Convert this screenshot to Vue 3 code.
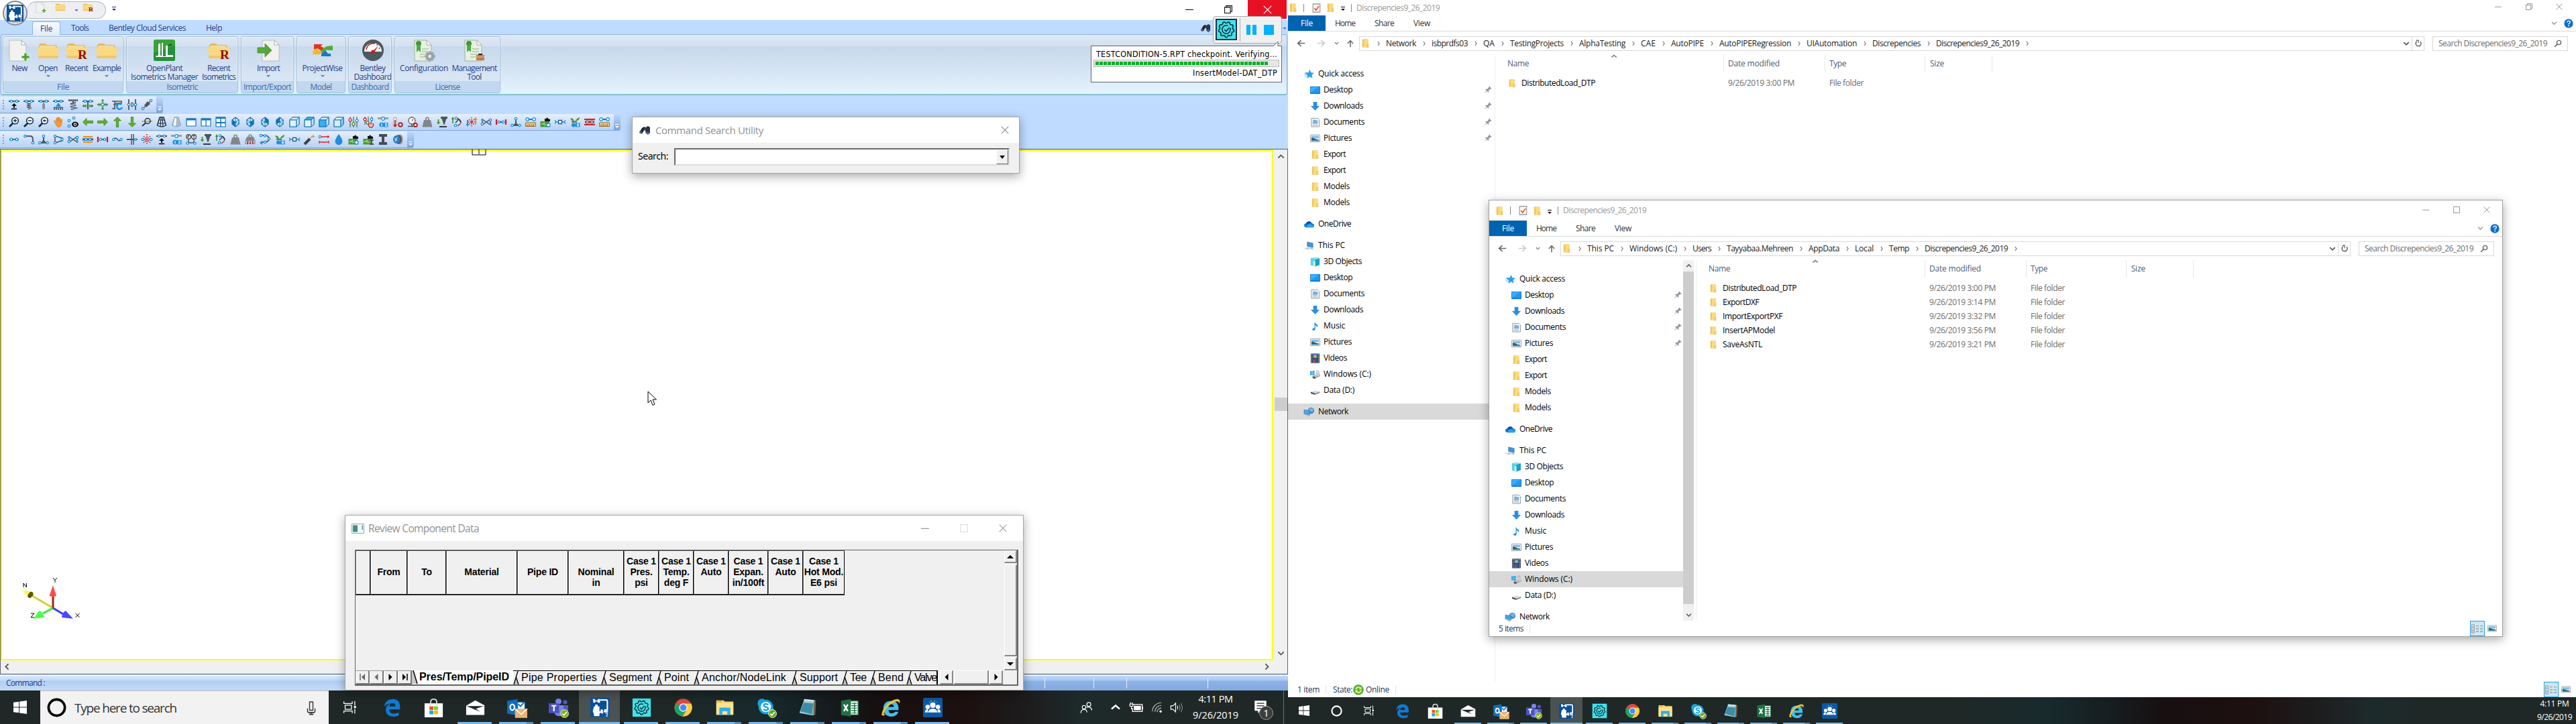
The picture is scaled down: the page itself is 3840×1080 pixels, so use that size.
<script setup>
import { h } from 'vue'

/* Stretches or tightens letter spacing so that a label takes the given width. */
const vFit = {
  mounted(el, { value }) {
    if (!value) return
    el.style.letterSpacing = '0px'
    const w = el.getBoundingClientRect().width
    const n = el.textContent.length
    el.style.letterSpacing = ((value - w) / n).toFixed(3) + 'px'
  }
}

const c = (x, y, r = 1.7) => `<circle cx="${x}" cy="${y}" r="${r}" fill="#fff" stroke="#0a8fd8" stroke-width="1.2"/>`
const l = (d, s = '#4d565c', w = 1.6) => `<path d="${d}" fill="none" stroke="${s}" stroke-width="${w}"/>`
const f = (d, s) => `<path d="${d}" fill="${s}"/>`
const topPipe = l('M0 3H16', '#4d565c', 2) + c(4, 3) + c(12, 3)
const ceil = l('M1 2H15M2 0V3M5 0V3M8 0V3M11 0V3M14 0V3')
const mag = c2 => l('M6.5 9.5L1 15', '#12303f', 2.6) + `<circle cx="9.5" cy="6" r="4.8" fill="#fff" stroke="#12303f" stroke-width="1.6"/>` + c2
const folderBody = (x, y, w, hh) => `<g transform="translate(${x} ${y}) scale(${w / 32} ${hh / 24})"><path d="M2 3L4 1H12L14 3H28L29 8H2Z" fill="#e6b85a"/><path d="M3 4H27V8H3Z" fill="#f6dc94"/><path d="M0 9Q0 7 2 7H30Q32 7 32 9L30 22H2Z" fill="#f9d982"/><path d="M1 19H31L30 23H2Z" fill="#f2c768"/></g>`
const doc = '<path d="M1 1H19L26 8V32H1Z" fill="#f1f1f0" stroke="#b9bcbd" stroke-width="1"/><path d="M19 1V8H26Z" fill="#fff" stroke="#a9adae" stroke-width="1"/>'
const cube = (t, a, b) => `<path d="M1 5L5 1H15V11L11 15H1Z" fill="#fff" stroke="#1577b5" stroke-width="1.2"/><path d="M1 5L5 1H15L11 5Z" fill="${t}" stroke="#1577b5"/><path d="M1 5H11V15H1Z" fill="${a}" stroke="#1577b5"/><path d="M11 5L15 1V11L11 15Z" fill="${b}" stroke="#1577b5"/>`
const dia = d => `<path d="M8 1L13 5V11L8 15L3 11V5Z" fill="#eaf6fd" stroke="#0d6fb3" stroke-width="1.3"/>` + l('M8 1V15M3 5L13 11M13 5L3 11', '#0d6fb3', 1) + f(d, '#0876bd')
const greenArrow = r => `<g transform="rotate(${r} 8 8)"><path d="M0.5 8L6 2.5V6.3H15.5V9.7H6V13.5Z" fill="#62ae2c" stroke="#3c8a14" stroke-width=".8"/></g>`
const cert = '<path d="M1 1H19L26 8V32H1Z" fill="#e8efe4" stroke="#9fb39b"/><path d="M19 1V8H26Z" fill="#fff" stroke="#a9adae"/><circle cx="7" cy="6" r="4" fill="#3f9a35"/><path d="M4 8H10V19L7 16L4 19Z" fill="#4cab3f"/><path d="M12 14H22M12 18H22M9 22H20M9 26H18" stroke="#a9cba1" stroke-width="1.4"/>'
const gear = (cx, cy, k, col, w) => {
  let p = ''
  for (let i = 0; i <= 80; i++) {
    const a = (i / 80) * Math.PI * 2
    const r = k * (1 + 0.09 * Math.max(-1, Math.min(1, 2 * Math.sin(a * 9))))
    p += (i ? 'L' : 'M') + (cx + r * Math.cos(a)).toFixed(2) + ' ' + (cy + r * Math.sin(a)).toFixed(2)
  }
  return `<path d="${p}Z" fill="none" stroke="${col}" stroke-width="${w}" stroke-linejoin="round"/><path d="M${cx + k * 0.52} ${cy - k * 0.25}A${k * 0.58} ${k * 0.58} 0 1 1 ${cx + k * 0.25} ${cy - k * 0.52}" fill="none" stroke="${col}" stroke-width="${w}"/><path d="M${cx - k * 0.28} ${cy}L${cx - k * 0.02} ${cy + k * 0.25}L${cx + k * 0.4} ${cy - k * 0.25}" fill="none" stroke="${col}" stroke-width="${w}"/>`
}
const pipeLogo = '<path d="M4 2H8V4H12V2H16V8H12V6H8V8H5Z" fill="#fff"/><path d="M16 3.4H26Q28 3.4 28 6V20H24V23H29" fill="none" stroke="#fff" stroke-width="2.4"/><path d="M8 11H12V14H15V22H17V19H20V25H17V24L15 26V30H6V27L4 22L6 14H8Z" fill="#fff"/><path d="M20 20V26M22 22H25" stroke="#fff" stroke-width="1.6"/><path d="M25 26H29L26 30H29" fill="none" stroke="#fff" stroke-width="1.1"/>'

const icons = {
  hanger: topPipe + f('M8 6L12 10H9V13H7V10H4Z', '#111') + l('M4 14.5H12', '#111', 1.6),
  spring: topPipe + l('M5 6L11 7L5 9L11 10L5 12L11 13L7 15', '#5b646a', 1.5),
  rod: topPipe + f('M7 4H9V7H10V14L8 15.5L6 14V7H7Z', '#8b9397'),
  ground: topPipe + f('M8 5L12 11H4Z', '#1b8fe0') + l('M1 12.5H15M2 12V16M5 12V16M8 12V16M11 12V16M14 12V16'),
  springc: ceil + l('M8 3V5M12 5L4 7L12 9L4 11L12 13L5 15', '#4d565c', 2),
  teed: topPipe + l('M8 3V15', '#4d565c', 2) + l('M0 10H6M10 10H16M2 8V12M5 8V12M11 8V12M14 8V12', '#3b8c1a', 1.4),
  crossd: l('M8 0V16M0 8H16', '#3b8c1a', 1.5) + l('M6 2H10M6 14H10M2 6V10M14 6V10M4 6V10M12 6V10', '#3b8c1a', 1) + c(8, 8, 2.2),
  supc: l('M0 3H15M4 3V6H14V3M2 8H8M4 8V15M0 14H5') + `<path d="M14 8A4 4 0 1 0 15 12" fill="none" stroke="#0a8fe6" stroke-width="2.4"/>`,
  damper: l('M3 0V16M13 0V16', '#4d565c', 1.8) + c(3, 8) + c(13, 8) + l('M7 5H8Q10 6 10 8T8 11H7Z', '#4d565c', 1.1),
  strut: l('M1 15L15 1', '#4d565c', 1.3) + f('M4 9L9 3L13 7L7 12Z', '#4d565c') + c(2, 14) + c(14, 2),
  zin: mag(l('M7 6H12M9.5 3.5V8.5', '#12303f', 1.5)),
  zout: mag(l('M7 6H12', '#12303f', 1.5)),
  zwin: mag(f('M7 6L9.5 3.5V5.2H12V6.8H9.5V8.5Z', '#12303f')),
  hand: '<path d="M3 9L1 6.5Q2 5 3.5 6.5L4.8 8V2.5Q5.7 1.5 6.6 2.5V7V1.3Q7.6.3 8.6 1.3V7L9.2 2Q10.2 1 11 2.2V8L12.2 4Q13.4 3.4 13.8 4.6L13 11Q12 15.5 8.5 15.5Q5 15.5 3 9Z" fill="#f59a36" stroke="#d77916" stroke-width=".6"/>',
  eye: c(9, 2) + c(2, 6) + c(2, 14) + '<ellipse cx="11" cy="11.5" rx="5" ry="4" fill="#111"/><circle cx="11" cy="11.5" r="2.3" fill="#fff"/><circle cx="11" cy="11.5" r="1.2" fill="#111"/>',
  aleft: greenArrow(0), aright: greenArrow(180), aup: greenArrow(90), adown: greenArrow(270),
  magl: l('M0 7H16', '#f08c1e', 1.6) + l('M6 9.5L1 14', '#12303f', 1.8) + '<circle cx="9" cy="6.5" r="4" fill="none" stroke="#12303f" stroke-width="1.5"/>',
  wire: '<path d="M5 1H11L14.5 13Q8 17 1.5 13Z" fill="none" stroke="#1b2a33" stroke-width="1.4"/>' + l('M4 5H12M2.5 10H13.5M7 1L6 15M9 1L10 15', '#1b2a33', 1.1),
  cone: '<path d="M5 1Q8 0 11 1L14.5 13Q8 17 1.5 13Z" fill="#aeb9c2" stroke="#6aa5cf" stroke-width=".9"/><path d="M5.5 2H8L7 14L3.5 13Z" fill="#fff"/>',
  win: '<path d="M1 3H15V14H1Z" fill="#fff" stroke="#1379bd" stroke-width="1.2"/><path d="M1 2.5H15V5.5H1Z" fill="#1379bd"/>',
  win2: '<path d="M1 3H15V14H1Z" fill="#fff" stroke="#1379bd" stroke-width="1.2"/><path d="M1 2.5H15V5.5H1ZM7.4 4H8.8V14H7.4Z" fill="#1379bd"/>',
  win4: '<path d="M1 1H15V15H1Z" fill="#fff" stroke="#1379bd" stroke-width="1.2"/><path d="M1 .5H15V3H1ZM7.3 2H8.8V15H7.3ZM1 8H15V10H1Z" fill="#1379bd"/>',
  d1: dia('M3 5L8 8V15L3 11Z'), d2: dia('M8 8L13 5V11L8 15Z'), d3: dia('M8 1L13 5V11L8 8Z'), d4: dia('M8 1L3 5V11L8 8Z'),
  cu1: cube('#d9effc', '#e2f3fd', '#c5e5f8'), cu2: cube('#3aaef2', '#e2f3fd', '#c5e5f8'), cu3: cube('#d9effc', '#3aaef2', '#c5e5f8'), cu4: cube('#eef8fe', '#d9effc', '#8ccbf4'),
  slid: l('M3 0V16M8 0V16M13 0V16', '#4d565c', 1.1) + '<circle cx="3" cy="5" r="2.1" fill="#fff" stroke="#c22" stroke-width="1.3"/><circle cx="8" cy="11" r="2.1" fill="#fff" stroke="#3b8c1a" stroke-width="1.3"/>' + c(13, 6, 2),
  slidp: l('M3 0V12M8 0V12M13 0V8', '#4d565c', 1.1) + '<circle cx="3" cy="4" r="2" fill="#fff" stroke="#c22" stroke-width="1.3"/><circle cx="7" cy="9" r="2" fill="#fff" stroke="#3b8c1a" stroke-width="1.3"/>' + c(13, 4, 1.8) + '<path d="M9.5 10A3.5 3.5 0 1 0 14.5 10M12 8V12" fill="none" stroke="#c22" stroke-width="1.5"/>',
  info: l('M0 2.5H16', '#9aa2a6', 3) + c(8, 3, 2.3) + '<circle cx="6" cy="12" r="3.6" fill="#1b8fe0"/><path d="M9 9H15.5V15.5H9Z" fill="#1b8fe0"/><path d="M6 10V14.5M11 10.5H14M11 12.3H14M11 14H14" stroke="#fff" stroke-width="1.1"/>',
  thermo: '<path d="M2 2Q4 0 6 2V10Q8 13 5.5 15H2.5Q0 13 2 10Z" fill="#fff" stroke="#8e969b"/><path d="M3.2 5H4.8V14H3.2Z" fill="#d11"/><circle cx="4" cy="13" r="2" fill="#d11"/><circle cx="12" cy="12" r="2.8" fill="none" stroke="#b3161b" stroke-width="1.8"/>',
  gauge: '<circle cx="7" cy="6" r="5" fill="#fff" stroke="#7a8287" stroke-width="1.8"/><path d="M7 6L9 4" stroke="#c22" stroke-width="1.2"/>' + l('M7 11V14M1 14.5H9') + '<circle cx="12.3" cy="12.4" r="2.6" fill="#fff" stroke="#b3161b" stroke-width="1.8"/>',
  weight: '<path d="M3 5H13L15.5 15.5H.5Z" fill="#80878b"/><circle cx="8" cy="3.5" r="2.2" fill="none" stroke="#80878b" stroke-width="1.6"/>',
  weighta: '<path d="M3 4H13L15.5 10H.5Z" fill="#80878b"/><circle cx="8" cy="3" r="2" fill="none" stroke="#80878b" stroke-width="1.6"/>' + l('M1 10V15M5 9V14M11 9V14M15 10V15', '#80878b', 1.2) + l('M4 10V14M8 10V14M12 10V14', '#c11', 1.2) + f('M2.5 13H5.5L4 16ZM6.5 13H9.5L8 16ZM10.5 13H13.5L12 16Z', '#c11'),
  drill: l('M2.5 4V10', '#3b9a1a', 1.8) + f('M0 8H5L2.5 12Z', '#3b9a1a') + f('M6 0H16V3H14.5L11.5 12H10.5L7.5 3H6Z', '#4d565c') + l('M4 15H15', '#111', 1.6),
  rot: l('M2 2V10', '#2f7d2a', 1.4) + f('M0 4L2 0L4 4Z', '#2f7d2a') + l('M7 3Q13 3 14 9', '#2b3a44', 1.8) + l('M6 9L10 5', '#2b3a44', 1.4) + c(7, 2.5) + c(6, 13) + l('M9 14L14 10', '#c22', 1.6),
  updn: '<path d="M8 1V15M3 8H13M4 4L12 12M12 4L4 12" fill="none" stroke="#d22" stroke-width="1.6" stroke-dasharray="1.6 1.4"/>' + l('M2 5V12', '#1b8fe0', 2) + f('M-.5 11H4.5L2 15Z', '#1b8fe0') + l('M14 4V12', '#f08c1e', 2) + f('M11.5 5H16.5L14 0Z', '#f08c1e'),
  valve: l('M2 4L14 12V4L2 12Z', '#4d565c', 1.5) + c(2, 11) + c(14, 5) + c(2, 5, 1.2) + c(14, 11, 1.2),
  flange: l('M3 8H13', '#4d565c', 2) + c(5, 8) + c(11, 8) + l('M1 4V12M15 4V12', '#d8151b', 2.2),
  tee: l('M1 13H15M8 13V4', '#4d565c', 2) + f('M5 12L8 8L11 12Z', '#4d565c') + c(8, 3) + c(2.5, 13) + c(13.5, 13),
  ruler: l('M3 4H13', '#4d565c', 1.8) + c(3, 4, 2.3) + c(13, 4, 2.3) + '<path d="M.5 9H15.5V14.5H.5Z" fill="#f0c987" stroke="#9c6a24"/><path d="M3 12V14M6 11V14M9 12V14M12 11V14" stroke="#7a4d12"/>',
  house: f('M7 6V3H9L11 1L12 3L15 4V7H7Z', '#111') + '<path d="M.5 7H14V15.5H.5Z" fill="#4b9a2f"/><path d="M2 11H5L7 9M6 12H10" stroke="#d8f0cc" stroke-width="1.2" fill="none"/>' + c(12.5, 12.5, 2.6),
  houseb: f('M7 6V3H9L11 1L12 3L15 4V7H7Z', '#111') + '<path d="M.5 7H14V15.5H.5Z" fill="#4b9a2f"/><path d="M2 11H5L7 9M6 12H10" stroke="#d8f0cc" stroke-width="1.2" fill="none"/><path d="M10 8H16V10H14V14H16V16H10V14H12V10H10Z" fill="#4d565c"/>',
  redu: l('M0 5.5Q3 8 0 10.5M16 5.5Q13 8 16 10.5M2 8H14', '#0a8fd8', 1.3) + '<path d="M5.5 5.5H10.5V10.5H5.5Z" fill="#fff" stroke="#1d5d85" stroke-width="1.3"/>',
  plant: f('M7 8Q7 3 2 2Q0 5 7 8Q12 1 15 1Q15 6 8 7Z', '#4b9a2f') + l('M3 8H11') + '<circle cx="6" cy="12.5" r="3" fill="#1b8fe0"/><path d="M9 9.5H15.5V15.5H9Z" fill="#1b8fe0"/><path d="M11 11H14M11 12.5H14M11 14H14" stroke="#fff"/>',
  pipered: '<path d="M0 4H16M0 12H16" stroke="#c22" stroke-width="2"/>' + l('M1 8H15', '#66707a', 4) + '<circle cx="4.5" cy="8" r="2.2" fill="#9cc" stroke="#c22"/><circle cx="11.5" cy="8" r="2.2" fill="#9cc" stroke="#c22"/>',
  pipe: l('M1 8H15', '#4d565c', 1.8) + c(4, 8, 1.9) + c(12, 8, 1.9),
  bend: l('M1 3H10Q14 3 14 8V14', '#4d565c', 1.8) + c(2.5, 3) + c(14, 13),
  reducer: l('M3 3L14 6V10L3 13Z', '#4d565c', 1.5) + c(3, 3) + c(3, 13) + c(13.5, 8),
  insul: '<path d="M1 4H15M1 12H15" stroke="#f08c1e" stroke-width="1.8"/>' + l('M0 8H16', '#4d565c', 3) + c(5, 8) + c(11, 8),
  flex: l('M2 8Q5 4 8 8T14 8', '#4d565c', 1.6) + c(2.5, 8) + c(13.5, 8),
  cross: l('M7 0V16M10 0V16', '#4d565c', 1.5) + l('M0 8H16', '#4d565c', 2) + c(13, 8, 1.4),
  redx: '<path d="M8 0V16M1 8H15M3 3L13 13M13 3L3 13" stroke="#d22" stroke-width="1.7" stroke-dasharray="1.8 1.4"/>' + c(1.8, 8) + c(14.2, 8),
  ft: '<circle cx="4" cy="4" r="3.3" fill="#fff" stroke="#333" stroke-width="1.2"/><circle cx="12" cy="4" r="3.3" fill="#fff" stroke="#333" stroke-width="1.2"/><path d="M3 6V2.5H5M3 4H4.6M10.5 2.5H13.5M12 2.5V6" stroke="#222" fill="none"/>' + l('M4 8V13H12V8', '#4d565c', 1.5) + c(2.5, 13.5) + c(13.5, 13.5),
  bendb: l('M2 2H9Q14 3 14 7T9 12H3', '#4d565c', 1.6) + c(2, 2) + c(8, 2.5) + c(14, 7) + c(8, 12) + f('M4 10V16L0 13Z', '#0a8fd8'),
  tnt: l('M1 15L9 7', '#3b4247', 4) + l('M10 6Q12 2 15 3', '#666', 1) + f('M14 0L15 3L17 4L15 5L13 6Z', '#f5a623'),
  reddim: c(2, 4) + l('M4 4H16M1 12H15', '#d22', 1.4) + l('M1 10V14M15 10V14M14 2V6', '#d22', 1.2),
  drop: '<path d="M8 .5Q13 7.5 13 11A5 4.8 0 0 1 3 11Q3 7.5 8 .5Z" fill="#1b90dc" stroke="#0c6dae" stroke-width=".6"/>',
  beam: f('M2 0H14V4H10V12H14V16H2V12H6V4H2Z', '#454d53'),
  disc: '<ellipse cx="12" cy="8" rx="3.8" ry="7.6" fill="#9fa8ad"/><ellipse cx="9" cy="8" rx="5" ry="7" fill="#545c62"/><ellipse cx="6" cy="8" rx="5" ry="6" fill="#2a82c8"/><path d="M3 6L7 10M7 5L4 11" stroke="#fff"/>',

  /* ribbon, 32 units */
  newdoc: doc + '<path d="M23 20H27V24H31V28H27V32H23V28H19V24H23Z" fill="#4da32f" stroke="#fff" stroke-width=".6"/>',
  folder: folderBody(0, 5, 32, 24),
  folderR: folderBody(0, 5, 32, 24) + '<text x="18" y="29" font-family="Liberation Serif, serif" font-size="19" font-weight="bold" fill="#8c0f12">R</text>',
  plant32: '<rect width="32" height="32" rx="3" fill="#3aa23a"/><path d="M0 20L32 8V29Q32 32 29 32H3Q0 32 0 29Z" fill="#23923a"/><path d="M4 24H7V7Q9 4 10 7V24H12V5H14V25H18V10Q20 7 21 10V23H29V26H3Z" fill="#fff"/><path d="M22 9L27 7" stroke="#0e5e20" stroke-width="2"/>',
  import32: '<g transform="translate(6 0)">' + doc + '</g><path d="M0 12H11V6L21 16L11 26V20H0Z" fill="#55a93c" stroke="#3d8d28" stroke-width=".8"/>',
  pw: '<path d="M3 7H16L13 10L20 14L14 17L8 13L3 15Z" fill="#e2351c"/><path d="M0 18L8 13V16L17 18L12 22H0L3 20Z" fill="#f6b81d"/><path d="M31 9V16H22L24 14L15 20L13 16L22 10Z" fill="#53ab34"/><path d="M14 21L20 16L24 21H28V25H14Z" fill="#1e74d2"/>',
  dash: '<circle cx="16" cy="16" r="16" fill="#4d5960"/><path d="M3 18A13 13 0 1 1 29 18Z" fill="#fff"/><path d="M6 15A10.5 10.5 0 0 1 19 6M21.5 7.5L23 8.6M25 12L26 14" fill="none" stroke="#d3181c" stroke-width="1.6"/><path d="M14 19L24 9L18 19Z" fill="#d3181c"/><circle cx="16" cy="18" r="2.6" fill="#d3181c"/>',
  lic: '<g transform="translate(1 0)">' + cert + '<circle cx="24" cy="25" r="4.5" fill="none" stroke="#98a3a9" stroke-width="4"/><circle cx="24" cy="25" r="7" fill="none" stroke="#98a3a9" stroke-width="1.6" stroke-dasharray="2.6 2.6"/></g>',
  licm: '<g transform="translate(1 0)">' + cert + '<path d="M18 23H30V31H18Z" fill="#c57a44"/><path d="M21 21H27V23H21Z" fill="#222"/><path d="M18 26H30" stroke="#e4a878" stroke-width="1.4"/></g>',
  bino: '<path d="M0 11L4 4L7 2L9 4L6 9L4 13Q1 14 0 11Z" fill="#1e242b"/><path d="M8 4L12 1L15 3L15 12L12 15L9 12Z" fill="#2b333c"/><ellipse cx="2" cy="11" rx="1.6" ry="2" fill="#4863a8"/><ellipse cx="12" cy="12" rx="2" ry="2.2" fill="#4863a8"/><path d="M6 4L10 5V8L7 8Z" fill="#3a444e"/>',

  /* explorer, 16 units */
  fold: '<path d="M3 1.5H9L10 3V14.5L5 14L3 15Z" fill="#eec45a"/><path d="M4 1H12.5V15H9.5L5.5 14.3V2.5Z" fill="#fbdb80"/><path d="M9.5 9H13V15H9.5Z" fill="#f3ca62"/>',
  star: '<path d="M9 .8L11 5.6L16 6L12.2 9.4L13.4 14.8L9 12L4.6 14.8L5.6 10L2 7H0L2 5.6L7 5.6Z" fill="#2ba0e8"/><path d="M0 9.5H5M1 12H4.5" stroke="#6ec2f2" stroke-width="1"/>',
  desktop: '<path d="M.5 2.5H15.5V13.5H.5Z" fill="#1b9bf5" stroke="#1476c4"/><path d="M1 12L13 3H1Z" fill="#3bb0ff"/><path d="M1 13H15" stroke="#0b62aa"/>',
  down: '<path d="M5 1H11V7.5H15L8 15L1 7.5H5Z" fill="#2e8ede"/>',
  docs: '<path d="M2 1.5H12L14.5 4V15H2Z" fill="#f4f6f7" stroke="#8d979d"/><path d="M4 4.5H9M4 10H12M4 12.5H12" stroke="#8fa0ab"/><path d="M5 5.8H12M4 8H12" stroke="#3c9bdd" stroke-width="1.5"/>',
  pics: '<path d="M.5 2.5H15.5V13.5H.5Z" fill="#fff" stroke="#9aa0a4"/><path d="M2 4H14V8H2Z" fill="#7cc0f0"/><path d="M2 7Q6 7 9 9L14 10V12H2Z" fill="#2e6558"/><path d="M2 10.5H14V12H2Z" fill="#3d7fae"/>',
  one: '<path d="M4 13Q0 13 0 9.8Q0 7 3 6.6Q5 3 8.4 3.4Q11 3.6 12.2 6.4Q16 7 16 10Q16 13 13 13Z" fill="#1378d3"/><path d="M5 13Q3 10 6 8.5Q9 7 12 9Q16 9 16 11Q15.6 13 13 13Z" fill="#2ba3ee"/><path d="M3 6.6Q5 3 8.4 3.4Q11 3.6 12 6.2Q8 6 5 9Z" fill="#0a53a8"/>',
  pc: '<path d="M5 2L14 4V11L5 9Z" fill="#2f9ceb" stroke="#5f7484" stroke-width=".8"/><path d="M0 12L6 10.5L12 12.5L5 14.5Z" fill="#c9d0d5"/><path d="M10 11L15 13L12 14Z" fill="#9eabb3"/>',
  obj: '<path d="M8 1L15 2.5V13L8 15.5L1 13V2.5Z" fill="#16a2c4"/><path d="M1 2.5L8 4.5V15.5L1 13Z" fill="#56d3e4"/><path d="M1 2.5L8 1L15 2.5L8 4.5Z" fill="#8fe6ef"/><path d="M5 7H8V15.5L5 14Z" fill="#d5f6f8"/>',
  music: '<path d="M7 1Q8 4 12 6Q12 9 10.5 10.5Q11 7.5 8.3 6.5V12.5Q8 15 5.5 15Q3 14.8 3.4 12.6Q4.2 10.8 7 11.2Z" fill="#1a8fe3"/>',
  video: '<path d="M1 .5H15V15.5H1Z" fill="#37404a"/><path d="M4 1H12V7.5H4Z" fill="#3c78c9"/><path d="M4 8.5H12V15H4Z" fill="#2b59a5"/><path d="M6 3H10V7H6Z" fill="#e4b23c"/><path d="M5 11H8V15H5Z" fill="#c8452d"/><path d="M2.5 1V15M13.5 1V15" stroke="#d6dde3" stroke-width="1.2" stroke-dasharray="1.3 1.3"/>',
  cdrive: '<path d="M0 3L3 2.7V5.6H0ZM3.6 2.6L7 2.2V5.6H3.6ZM0 6.2H3V9H0ZM3.6 6.2H7V9.6L3.6 9.2Z" fill="#1aa0e8"/><path d="M4 11L9 9L16 8V11L8 15L4 14Z" fill="#aeb4b8"/><path d="M4 11L8 12V15L4 14Z" fill="#555"/><path d="M9 5H15V10H9Z" fill="#c8ccce"/><path d="M10.4 5V3Q12 .8 13.6 3V5" fill="none" stroke="#a7adb0" stroke-width="1.2"/>',
  ddrive: '<path d="M1 10L8 8L15.5 9.5L8 12.5Z" fill="#d9dcde"/><path d="M1 10L8 12.5V15L1 12.8Z" fill="#4c4f52"/><path d="M8 12.5L15.5 9.5V11.6L8 15Z" fill="#8d9194"/>',
  net: '<circle cx="11" cy="6" r="5" fill="#3f86c8"/><path d="M7 4Q11 0 15 4L13 9Z" fill="#76b7e6"/><path d="M0 4.5L9 6V13L0 11Z" fill="#3aa8ee" stroke="#5f7484" stroke-width=".7"/><path d="M2 13L6 12.5L10 14L6 15.2Z" fill="#b7c0c6"/>',
  pin: '<g transform="rotate(45 8 8)"><path d="M5 1H11V3L10 4V8L12.5 10V11H3.5V10L6 8V4L5 3Z" fill="#8a98a3"/><path d="M7.4 11H8.6V16H7.4Z" fill="#8a98a3"/></g>',
  check: '<path d="M1.5 1H14.5V15H1.5Z" fill="#fbfbfb" stroke="#8c8c8c" stroke-width="1.3"/><path d="M4 8L7 11.5L12.5 4.5" fill="none" stroke="#e2571e" stroke-width="2"/>',
  left: '<path d="M15 8H2M8 2.5L2 8L8 13.5" fill="none" stroke="currentColor" stroke-width="2"/>',
  right: '<path d="M1 8H14M8 2.5L14 8L8 13.5" fill="none" stroke="currentColor" stroke-width="2"/>',
  up: '<path d="M8 15V2M2.5 8L8 2L13.5 8" fill="none" stroke="currentColor" stroke-width="2"/>',
  cd: '<path d="M2 5L8 11L14 5" fill="none" stroke="currentColor" stroke-width="2.6"/>',
  cu: '<path d="M2 11L8 5L14 11" fill="none" stroke="currentColor" stroke-width="2.6"/>',
  cl: '<path d="M11 2L5 8L11 14" fill="none" stroke="currentColor" stroke-width="2.6"/>',
  cr: '<path d="M5 2L11 8L5 14" fill="none" stroke="currentColor" stroke-width="2.6"/>',
  refresh: '<path d="M12 4.2A5.3 5.3 0 1 1 5 3.6" fill="none" stroke="#666" stroke-width="2"/><path d="M4 .8H9V6.5H7.4V2.6H4Z" fill="#666"/>',
  magr: '<circle cx="10" cy="6" r="4.2" fill="none" stroke="#666" stroke-width="1.8"/><path d="M7 9L1.5 14.5" stroke="#666" stroke-width="2.2"/>',
  min: '<path d="M0 8.5H16" stroke="currentColor" stroke-width="1.4"/>',
  max: '<path d="M.8 .8H15.2V15.2H.8Z" fill="none" stroke="currentColor" stroke-width="1.4"/>',
  rest: '<path d="M.8 3.8H12.2V15.2H.8ZM3.8 3.8V.8H15.2V12.2H12.2" fill="none" stroke="currentColor" stroke-width="1.4"/>',
  x: '<path d="M1 1L15 15M15 1L1 15" stroke="currentColor" stroke-width="1.4"/>',
  help: '<circle cx="8" cy="8" r="7.6" fill="#0b6fd0"/><path d="M5.6 6Q5.8 3.6 8.2 3.6T10.6 6Q10.6 7.2 8.2 8.4V9.8" fill="none" stroke="#fff" stroke-width="1.6"/><circle cx="8.2" cy="12" r="1.1" fill="#fff"/>',
  sync: '<circle cx="8" cy="8" r="7.8" fill="#4fae3a"/><path d="M4 7.5A4 4 0 0 1 11 5.5M12 8.5A4 4 0 0 1 5 10.5" fill="none" stroke="#e9f07a" stroke-width="2"/><path d="M12.6 3V7.4H8.4ZM3.4 13V8.6H7.6Z" fill="#e9f07a"/>',
  details: '<path d="M.7 1H4.3V15H.7ZM.7 5.6H4.3M.7 10.3H4.3" fill="#fff" stroke="#888"/><path d="M7 3.3H11M13 3.3H17M7 8H11M13 8H17M7 12.6H11M13 12.6H17" stroke="#777" stroke-width="1.1"/><path d="M2 3H3V4H2Z" fill="#444"/><path d="M2 7.5H3V8.5H2Z" fill="#2a8ae0"/><path d="M2 12H3V13.4H2Z" fill="#c22"/>',

  /* task bars, 32 units */
  start: '<path d="M0 4.5L13 2.7V15.2H0ZM14.6 2.5L32 0V15.2H14.6ZM0 16.8H13V29.3L0 27.5ZM14.6 16.8H32V32L14.6 29.5Z" fill="#fff"/>',
  ring: '<circle cx="16" cy="16" r="13.4" fill="none" stroke="currentColor" stroke-width="4"/>',
  tview: '<path d="M1 2V7H21V2M1 30V25H21V30M4 11H19V21H4ZM27 1V12M27 20V31" fill="none" stroke="#fff" stroke-width="2"/><path d="M25 13H30V18H25Z" fill="#fff"/>',
  edge: '<path d="M3 14Q5 2 17 2Q29 2.5 29 15V19H11Q11.5 26 19 26Q24 26 27 24V29Q23 31 18 31Q6 30 5.5 20Q5.500 13 13 9Q7 10 3 14ZM11.500 14H21.500Q21.500 8.500 17 8.500Q12.500 8.500 11.500 14Z" fill="#0e7bd6"/>',
  store: '<path d="M1 9H31V32H1Z" fill="#fff"/><path d="M11 13V7Q11 2 16 2Q21 2 21 7V13" fill="none" stroke="#ddd" stroke-width="2"/><path d="M9 14H15.500V20H9Z" fill="#f1511b"/><path d="M16.500 14H23V20H16.500Z" fill="#80cc28"/><path d="M9 21H15.500V27H9Z" fill="#00adef"/><path d="M16.500 21H23V27H16.500Z" fill="#fbbc09"/>',
  mail: '<path d="M1 13L16 4L31 12V28H1Z" fill="#fff"/><path d="M1.500 13.500H30L17 18L24 23L1.500 13.500Z" fill="#1f2827"/>',
  outlook: '<path d="M0 5L17 2V29L0 26Z" fill="#0f6cbd"/><path d="M17 7H29V20H17Z" fill="#e9f3fb" stroke="#0f6cbd"/><path d="M18 10L22 14L28 7" fill="none" stroke="#0f6cbd" stroke-width="2"/><ellipse cx="8.500" cy="15.500" rx="3.500" ry="4.800" fill="none" stroke="#fff" stroke-width="2.400"/><path d="M13 18H33V33H13Z" fill="#eab476"/><path d="M13 18L23 27L33 18" fill="none" stroke="#fff" stroke-width="1.600"/>',
  teams: '<circle cx="16" cy="6" r="5" fill="#7b83eb"/><circle cx="27" cy="7" r="3.500" fill="#5059c9"/><path d="M9 12H25V23Q24 30 17 30T9 23Z" fill="#7b83eb"/><path d="M25 12H32V21Q31 25 26 25Z" fill="#5059c9"/><path d="M0 9H17V25H0Z" fill="#4b53bc"/><path d="M4.500 13H12.500M8.500 13V22" stroke="#fff" stroke-width="2.400"/><circle cx="26" cy="26" r="6.500" fill="#7ab800" stroke="#eee" stroke-width="1"/><path d="M22.500 26L25 28.500L29.500 23.500" fill="none" stroke="#fff" stroke-width="2"/>',
  apipe: '<rect width="32" height="32" rx="2" fill="#0a4f96"/>' + pipeLogo,
  tc: '<path d="M1 1H31V31H1Z" fill="#41e3ea"/>' + gear(16, 16, 10.600, '#133646', 1.7),
  chrome: '<circle cx="16" cy="16" r="14.500" fill="#dd4b3e"/><path d="M16 16L3.500 9A14.500 14.500 0 0 0 15 30.400L22 19Z" fill="#1da462"/><path d="M16 9.500H29A14.500 14.500 0 0 1 15 30.500L22 19Z" fill="#ffcd40"/><circle cx="16" cy="16" r="6.800" fill="#fff"/><circle cx="16" cy="16" r="5.400" fill="#4a8af4"/>',
  expl: '<path d="M2 4H14L16 6H30V27H2Z" fill="#f7d774"/><path d="M2 9H30V28H2Z" fill="#fde492"/><path d="M4 5H11V7H4Z" fill="#e7a82b"/><path d="M7 16H25V28H20V22H12V28H7Z" fill="#35aee8"/>',
  skype: '<circle cx="15" cy="15" r="12" fill="#12a5ea"/><circle cx="9" cy="9" r="7.500" fill="#12a5ea"/><circle cx="21" cy="21" r="7" fill="#12a5ea"/><circle cx="15" cy="15" r="8.500" fill="#fff"/><path d="M19 11.500Q15 8.500 12 11Q10.500 14 15 15Q20 16 18.500 19Q15 22 11 18.500" fill="none" stroke="#12a5ea" stroke-width="2.600"/><circle cx="26" cy="26" r="6.500" fill="#6aa807" stroke="#fff" stroke-width="1"/><path d="M22.500 26L25 28.500L29.500 23.500" fill="none" stroke="#fff" stroke-width="2"/>',
  note: '<path d="M10 2L28 4L27 28L24 29L2 25Z" fill="#6fb4c8"/><path d="M10 3L26 5L21 28L2 24Z" fill="#9bd0dd"/><path d="M9 8L25 9L22 27L3 22Z" fill="#3e8ba4"/><path d="M10 2L26 3.500L25 6L9 4.500Z" fill="#dfe7ea"/><path d="M26 6L29 5L28 27L25 28Z" fill="#7b5b3a"/>',
  excel: '<path d="M16 5H30V28H16Z" fill="#fff" stroke="#1e7145" stroke-width="1.600"/><path d="M19 9H28M19 13H28M19 17H28M19 21H28M19 25H28M24 8V26" stroke="#1e7145" stroke-width="1.500"/><path d="M2 5L18 2V31L2 28Z" fill="#1e7145"/><path d="M6.500 11L13 22M13 11L6.500 22" stroke="#fff" stroke-width="2.600"/>',
  ie: '<path d="M3 17Q4 5 16.500 5Q28 5.500 28 18V20H11.500Q12 25.500 17 25.500Q21 25.500 22 23H28Q25 31 16.500 31Q3.500 30 3 17ZM11.500 15H20.500Q20 10.500 16 10.500Q12 10.500 11.500 15Z" fill="#3fc0ee"/><path d="M4 29Q-2 31 2 21Q6 12 15 6Q27 -1 30 4Q31 6 29 10Q29 3 19 8Q9 14 5 22Q2 29 8 27Z" fill="#f6c12c"/>',
  people: '<rect width="32" height="32" rx="2" fill="#0b5aa5"/><circle cx="16" cy="12" r="4.500" fill="#fff"/><circle cx="7.500" cy="15" r="3.600" fill="#fff"/><circle cx="24.500" cy="15" r="3.600" fill="#fff"/><path d="M8.500 24Q9 19 14 18H18Q23 19 23.500 24ZM3 24Q3 19 8 18.500V24ZM29 24Q29 19 24 18.500V24Z" fill="#fff"/><path d="M10 7L11 8M13 4.500L13.500 6M19 4.500L18.500 6M22 7L21 8" stroke="#fff"/>',
  contacts: '<circle cx="22" cy="8" r="5" fill="none" stroke="#fff" stroke-width="2"/><circle cx="10" cy="15" r="4.500" fill="none" stroke="#fff" stroke-width="2"/><path d="M2 30Q2 21 10 21T17 28M16 16Q22 13 26 16T29 23" fill="none" stroke="#fff" stroke-width="2"/>',
  batt: '<path d="M8 9H30V25H8V17" fill="none" stroke="#fff" stroke-width="2"/><path d="M11 12H27V22H11Z" fill="#fff"/><path d="M30 14H32V20H30Z" fill="#fff"/><path d="M2 8H9V13H2ZM3.500 4V8M7.500 4V8M5.500 13V19H8" fill="none" stroke="#fff" stroke-width="1.800"/>',
  wifi: '<path d="M3 27A24 24 0 0 1 27 4M10 28A17 17 0 0 1 27 11M16 29A11 11 0 0 1 27 18" fill="none" stroke="#bbb" stroke-width="2"/><circle cx="25" cy="27" r="3" fill="#fff"/>',
  vol: '<path d="M2 12H7L13 6V26L7 20H2Z" fill="none" stroke="#fff" stroke-width="1.800"/><path d="M17 12Q19 16 17 20" fill="none" stroke="#fff" stroke-width="1.800"/><path d="M21 9Q25 16 21 23M25 6Q31 16 25 26" fill="none" stroke="#8b9191" stroke-width="1.600"/>',
  notif: '<path d="M2 2H30V26H16L10 32V26H2Z" fill="#fff"/><path d="M7 8H25M7 14H25M7 20H18" stroke="#1f2827" stroke-width="2"/>',
  mic: '<path d="M12 3H20V21H12Z" fill="#f2f2f2" stroke="#333" stroke-width="2.200" stroke-linejoin="round"/><path d="M7 17V22Q7 26 11 26H21Q25 26 25 22V17M16 26V30M11 30H21" fill="none" stroke="#333" stroke-width="2.200"/>'
}

const Ic = p => h('svg', {
  class: 'ic', width: p.w || p.s || 16, height: p.h || p.s || 16,
  viewBox: `0 0 ${p.vb || 16} ${p.vb || 16}`, preserveAspectRatio: 'none', innerHTML: icons[p.n]
})
Ic.props = ['n', 's', 'w', 'h', 'vb']

const tabs = [['File', 18], ['Tools', 26], ['Bentley Cloud Services', 115], ['Help', 24]]

const groups = [
  { t: 'File', tw: 18, w: 180, items: [
    { i: 'newdoc', l: [['New', 23]], w: 44 }, { i: 'folder', l: [['Open', 29]], a: 1, w: 41 },
    { i: 'folderR', l: [['Recent', 34]], w: 44 }, { i: 'folder', l: [['Example', 42]], a: 1, w: 46 }] },
  { t: 'Isometric', tw: 46, w: 167, items: [
    { i: 'plant32', l: [['OpenPlant', 54], ['Isometrics Manager', 100]], w: 108 },
    { i: 'folderR', l: [['Recent', 34], ['Isometrics', 50]], w: 54 }] },
  { t: 'Import/Export', tw: 71, w: 79, items: [{ i: 'import32', l: [['Import', 34]], a: 1, w: 76 }] },
  { t: 'Model', tw: 32, w: 73, items: [{ i: 'pw', l: [['ProjectWise', 60]], a: 1, w: 71 }] },
  { t: 'Dashboard', tw: 56, w: 65, items: [{ i: 'dash', l: [['Bentley', 38], ['Dashboard', 56]], w: 67 }] },
  { t: 'License', tw: 37, w: 158, items: [
    { i: 'lic', l: [['Configuration', 72]], w: 82 }, { i: 'licm', l: [['Management', 67], ['Tool', 21]], w: 68 }] }
]

const bars = [
  'hanger spring rod ground springc teed crossd supc damper strut',
  'zin zout zwin hand eye aleft aright aup adown magl wire cone win win2 win4 d1 d2 d3 d4 cu1 cu2 cu3 cu4 slid slidp info thermo gauge weight drill rot updn valve flange tee ruler house redu plant pipered ruler',
  'pipe bend tee reducer valve insul flange flex cross redx hanger info ft drill rot weight weighta bendb plant redu tnt reddim drop house houseb beam disc'
].map(s => s.split(' '))

const cols = [
  [22, []], [55, ['From']], [58, ['To']], [106, ['Material']], [76, ['Pipe ID']], [83, ['Nominal', 'in']],
  [52, ['Case 1', 'Pres.', 'psi']], [52, ['Case 1', 'Temp.', 'deg F']], [52, ['Case 1', 'Auto']],
  [59, ['Case 1', 'Expan.', 'in/100ft']], [52, ['Case 1', 'Auto']], [62, ['Case 1', 'Hot Mod.', 'E6 psi']]
]
const sheets = [['Pipe Properties', 113, 131], ['Segment', 64, 82], ['Point', 37, 56], ['Anchor/NodeLink', 126, 146], ['Support', 57, 75], ['Tee', 25, 42], ['Bend', 38, 54], ['Valve', 33, 46]]

const nav = [
  ['star', 'Quick access', 68, 0], ['desktop', 'Desktop', 43, 1, 1], ['down', 'Downloads', 59, 1, 1], ['docs', 'Documents', 61, 1, 1],
  ['pics', 'Pictures', 42, 1, 1], ['fold', 'Export', 33, 1], ['fold', 'Export', 33, 1], ['fold', 'Models', 39, 1], ['fold', 'Models', 39, 1],
  ['one', 'OneDrive', 49, 0], ['pc', 'This PC', 40, 0], ['obj', '3D Objects', 57, 1], ['desktop', 'Desktop', 43, 1],
  ['docs', 'Documents', 61, 1], ['down', 'Downloads', 59, 1], ['music', 'Music', 32, 1], ['pics', 'Pictures', 42, 1],
  ['video', 'Videos', 35, 1], ['cdrive', 'Windows (C:)', 71, 1], ['ddrive', 'Data (D:)', 46, 1], ['net', 'Network', 45, 0]
]
const wins = [
  { k: 'main', sel: 'Network', max: 'rest', status: ['1 item', 33], online: true, scroll: false,
    path: [['Network', 45], ['isbprdfs03', 54], ['QA', 17], ['TestingProjects', 80], ['AlphaTesting', 69], ['CAE', 22], ['AutoPIPE', 49], ['AutoPIPERegression', 107], ['UIAutomation', 75], ['Discrepencies', 72], ['Discrepencies9_26_2019', 124]],
    rows: [['DistributedLoad_DTP', 110, '9/26/2019 3:00 PM']] },
  { k: 'sub', sel: 'Windows (C:)', max: 'max', status: ['5 items', 37], online: false, scroll: true,
    path: [['This PC', 40], ['Windows (C:)', 71], ['Users', 28], ['Tayyabaa.Mehreen', 99], ['AppData', 46], ['Local', 28], ['Temp', 30], ['Discrepencies9_26_2019', 124]],
    rows: [['DistributedLoad_DTP', 110, '9/26/2019 3:00 PM'], ['ExportDXF', 54, '9/26/2019 3:14 PM'], ['ImportExportPXF', 89, '9/26/2019 3:32 PM'], ['InsertAPModel', 78, '9/26/2019 3:56 PM'], ['SaveAsNTL', 59, '9/26/2019 3:21 PM']] }
]

/* name, running state: 0 closed, 1 one window, 2 several windows, 3 focused */
const apps = [['edge', 0], ['store', 0], ['mail', 1], ['outlook', 2], ['teams', 1], ['apipe', 3], ['tc', 1], ['chrome', 1], ['expl', 2], ['skype', 2], ['note', 2], ['excel', 2], ['ie', 2], ['people', 1]]
</script>

<template>
  <div class="desk">
    <!-- first monitor -->
    <section class="mon">
      <div class="app">
        <header class="caption">
          <div class="qat">
            <Ic n="newdoc" vb="32" w="16" h="16" class="q1" /><Ic n="folder" vb="32" w="16" h="15" class="q2" />
            <i class="tri q3"></i><Ic n="folderR" vb="32" w="16" h="15" class="q4" />
          </div>
          <span class="qmore"><i class="bar"></i><i class="tri"></i></span>
          <div class="orb"><Ic n="apipe" vb="32" s="25" /></div>
          <div class="sys"><span><Ic n="min" s="12" /></span><span><Ic n="rest" s="12" /></span><span class="close"><Ic n="x" s="13" /></span></div>
        </header>
        <nav class="rtabs">
          <span v-for="(t, i) in tabs" :key="t[0]" :class="['rt', 'rt' + i]"><b v-fit="t[1]">{{ t[0] }}</b></span>
          <Ic n="bino" w="15" h="14" class="find" /><i class="tri last"></i>
        </nav>
        <div class="ribbon">
          <div v-for="g in groups" :key="g.t" class="grp" :style="{ width: g.w + 'px' }">
            <div class="gi">
              <div v-for="(it, k) in g.items" :key="k" class="cmd" :style="{ width: it.w + 'px' }">
                <Ic :n="it.i" vb="32" s="32" />
                <span v-for="s in it.l" :key="s[0]" class="ln"><b v-fit="s[1]">{{ s[0] }}</b></span>
                <i v-if="it.a" class="tri"></i>
              </div>
            </div>
            <div class="gl"><b v-fit="g.tw">{{ g.t }}</b></div>
          </div>
        </div>
        <div class="tools">
          <div v-for="(b, i) in bars" :key="i" class="tb">
            <i class="grip"></i>
            <span v-for="(n, k) in b" :key="k" class="ti"><Ic :n="n" s="16" /></span>
            <i class="over"><i class="bar"></i><i class="tri"></i></i>
          </div>
        </div>
        <div class="view">
          <div class="vrow">
            <div class="canvas">
              <svg class="north" width="22" height="9" viewBox="0 0 22 9"><path d="M1 0V8H21V0M11 0V7" fill="none" stroke="#000" /></svg>
              <svg class="triad" width="90" height="66" viewBox="0 0 90 66">
                <path d="M48 46L14 26" stroke="#d6cf2e" stroke-width="3" /><path d="M2 19L19 22L13 31Z" fill="#fdfb49" /><path d="M13 31Q8 30 12 24Q15 20 18 23Q20 27 16 29Q15 32 13 31Z" fill="#5c5600" />
                <path d="M48 46V26" stroke="#a61c1c" stroke-width="3" /><path d="M48 12L53 28Q48 30 42.500 28Z" fill="#ff4a4a" />
                <path d="M48 46L33 54" stroke="#39e839" stroke-width="3" /><path d="M19 62L27 50Q33 51 35 60Z" fill="#4dff4d" />
                <path d="M48 46L63 55" stroke="#3b3bf0" stroke-width="3" /><path d="M78 62L67 50Q62 52 61 60Z" fill="#4a4aff" />
                <path d="M4 15V9L8.500 15V9M48 1L51 4.500L54 1M51 4.500V8M15 54H20L15 60H20M81.500 54L87.500 60M87.500 54L81.500 60" fill="none" stroke="#000" />
              </svg>
              <svg class="cursor" width="15" height="24" viewBox="0 0 15 24"><path d="M1 1V18L5 14L8 21.500L11 20L8 13H13.500Z" fill="#fff" stroke="#000" /></svg>
            </div>
            <div class="vs"><Ic n="cu" s="11" /><i class="thumb"></i><Ic n="cd" s="11" /></div>
          </div>
          <div class="hs"><Ic n="cl" s="11" /><Ic n="cr" s="11" /></div>
        </div>
        <footer class="cmdbar"><b v-fit="58">Command :</b><div class="cells"><i class="w1"></i><i class="w2"></i><i class="w3"></i><i class="w4"></i></div></footer>
      </div>

      <footer class="task big">
        <span class="st"><Ic n="start" vb="32" s="20" /></span>
        <div class="sbox"><Ic n="ring" vb="32" s="29" /><span v-fit="152">Type here to search</span><Ic n="mic" vb="32" w="20" h="22" class="mic" /></div>
        <span class="tv"><Ic n="tview" vb="32" s="20" /></span>
        <span v-for="a in apps" :key="a[0]" :class="['ap', 's' + a[1]]"><Ic :n="a[0]" vb="32" s="29" /></span>
        <div class="tray">
          <Ic n="contacts" vb="32" s="19" class="t1" /><Ic n="cu" w="16" h="14" class="t2" /><Ic n="batt" vb="32" s="21" class="t3" /><Ic n="wifi" vb="32" s="18" class="t4" /><Ic n="vol" vb="32" s="21" class="t5" />
          <div class="clock"><span v-fit="51">4:11 PM</span><span v-fit="68">9/26/2019</span></div>
          <div class="nt"><Ic n="notif" vb="32" s="20" /><em>1</em></div><i class="edge"></i>
        </div>
      </footer>

      <div class="dlg search">
        <div class="dt"><Ic n="bino" w="17" h="15" /><span v-fit="161">Command Search Utility</span><Ic n="x" s="12" class="dx" /></div>
        <div class="db"><label v-fit="45">Search:</label><div class="combo"><i><i class="tri"></i></i></div></div>
      </div>

      <div class="dlg review">
        <div class="dt">
          <svg width="19" height="15" viewBox="0 0 19 15"><path d="M.5 .5H18.500V14.500H.5Z" fill="#f4f8fa" stroke="#9aa7ad" /><path d="M2 2.500H9V12.500H2Z" fill="#3d8f85" /><path d="M15.500 2.500H17V9H15.500Z" fill="#4a8fa8" /></svg>
          <span v-fit="165">Review Component Data</span>
          <div class="wc"><Ic n="min" s="12" /><Ic n="max" s="12" class="off" /><Ic n="x" s="12" /></div>
        </div>
        <div class="grid">
          <div class="gtop">
            <div class="heads">
              <div v-for="(cc, i) in cols" :key="i" :class="['hd', cc[1].length === 1 ? 'one' : '', cc[1][0] === 'Nominal' ? 'nom' : '']" :style="{ width: cc[0] + 'px' }"><span v-for="s in cc[1]" :key="s">{{ s }}</span></div>
            </div>
            <div class="gv"><i class="bt"><i class="tri upt"></i></i><i class="bt grow"></i><i class="bt"><i class="tri"></i></i></div>
          </div>
          <div class="gbot">
            <i class="nb"><svg width="9" height="10" viewBox="0 0 9 10"><path d="M1 0V10" stroke="#666" stroke-width="1.500" /><path d="M8 0V10L3 5Z" fill="#666" /></svg></i>
            <i class="nb"><svg width="6" height="10" viewBox="0 0 6 10"><path d="M5.500 0V10L.5 5Z" fill="#666" /></svg></i>
            <i class="nb"><svg width="6" height="10" viewBox="0 0 6 10"><path d="M.5 0V10L5.500 5Z" fill="#000" /></svg></i>
            <i class="nb"><svg width="9" height="10" viewBox="0 0 9 10"><path d="M8 0V10" stroke="#000" stroke-width="1.500" /><path d="M1 0V10L6 5Z" fill="#000" /></svg></i>
            <div class="sheets">
              <div class="sh act"><svg width="10" height="20" viewBox="0 0 10 20"><path d="M2 0L8 20H0V0Z" fill="#c8c8c8" /><path d="M2 0L8 20" stroke="#000" stroke-width="1.500" /></svg><b v-fit="134">Pres/Temp/PipeID</b></div>
              <div v-for="s in sheets" :key="s[0]" class="sh" :style="{ width: s[2] + 'px' }"><svg width="9" height="20" viewBox="0 0 9 20"><path d="M4 8L8 20H1Z" fill="#c0c0c0" /><path d="M7 0L1 20M4 8L8 20" stroke="#000" fill="none" stroke-width="1.300" /></svg><span v-fit="s[1]">{{ s[0] }}</span></div>
            </div>
            <div class="gh"><i class="bt"><svg width="6" height="10" viewBox="0 0 6 10"><path d="M5.500 0V10L.5 5Z" /></svg></i><i class="bt mid"></i><i class="bt"><svg width="6" height="10" viewBox="0 0 6 10"><path d="M.5 0V10L5.500 5Z" /></svg></i></div>
          </div>
        </div>
      </div>

      <div class="player">
        <div class="gearbox"><svg width="26" height="26" viewBox="3 3 26 26" v-html="icons.tc"></svg></div>
        <i class="psep"></i><i class="pz"></i><i class="pz"></i><i class="stop"></i>
      </div>
      <div class="note">
        <svg class="tail" width="9" height="8" viewBox="0 0 9 8"><path d="M1 8L8 1V8" fill="#fff" stroke="#666" /></svg>
        <span class="n1" v-fit="270">TESTCONDITION-5.RPT checkpoint. Verifying...</span>
        <div class="prog"><i></i></div>
        <span class="n2" v-fit="126">InsertModel-DAT_DTP</span>
      </div>
    </section>

    <!-- second monitor -->
    <section class="mon">
      <div v-for="w in wins" :key="w.k" :class="['exp', w.k]">
        <div class="et">
          <Ic n="fold" class="e1" s="15" /><i class="sp"></i><Ic n="check" w="13" h="14" /><Ic n="fold" s="15" class="e2" />
          <span class="em"><i class="bar"></i><i class="tri"></i></span><i class="sp s2"></i><span class="tt" v-fit="124">Discrepencies9_26_2019</span>
          <div class="ec"><span><Ic n="min" s="10" /></span><span><Ic :n="w.max" s="10" /></span><span><Ic n="x" s="10" /></span></div>
        </div>
        <div class="er"><span class="ef"><b v-fit="18">File</b></span><span class="a"><b v-fit="30">Home</b></span><span class="b"><b v-fit="29">Share</b></span><span class="c"><b v-fit="25">View</b></span>
          <Ic n="cd" s="9" class="ech" /><Ic n="help" s="14" /></div>
        <div class="ea">
          <Ic n="left" s="13" class="al" /><Ic n="right" s="13" class="ar" /><Ic n="cd" s="7" class="ad" /><Ic n="up" s="12" class="au" />
          <div class="addr"><Ic n="fold" s="15" /><Ic n="cr" w="6" h="8" class="cv" />
            <template v-for="p in w.path" :key="p[0]"><span v-fit="p[1]">{{ p[0] }}</span><Ic n="cr" w="6" h="8" class="cv" /></template>
            <Ic n="cd" s="10" class="drop" /><i class="rf"><Ic n="refresh" s="12" /></i></div>
          <div class="es"><span v-fit="162">Search Discrepencies9_26_2019</span><Ic n="magr" s="12" /></div>
        </div>
        <div class="eb">
          <div class="nav">
            <div v-for="(r, i) in nav" :key="i" :class="['nr', r[3] ? 'in' : 'top', r[1] === w.sel ? 'sel' : '']"><Ic :n="r[0]" s="15" /><span v-fit="r[2]">{{ r[1] }}</span><Ic v-if="r[4]" n="pin" s="12" class="pin" /></div>
          </div>
          <div v-if="w.scroll" class="nvs"><Ic n="cu" s="9" /><i></i><Ic n="cd" s="9" /></div>
          <div class="list">
            <div class="lh"><span v-fit="32">Name</span><span v-fit="77">Date modified</span><span v-fit="25">Type</span><span v-fit="21">Size</span><Ic n="cu" w="10" h="8" class="sort" /></div>
            <div v-for="r in w.rows" :key="r[0]" class="lr"><div><Ic n="fold" s="14" /><span v-fit="r[1]">{{ r[0] }}</span></div><div><span v-fit="99">{{ r[2] }}</span></div><div><span v-fit="51">File folder</span></div></div>
          </div>
        </div>
        <div class="eg"><span v-fit="w.status[1]">{{ w.status[0] }}</span><i class="gs"></i>
          <template v-if="w.online"><span v-fit="29">State:</span><Ic n="sync" s="16" class="sy" /><span v-fit="35">Online</span><i class="gs"></i></template>
          <div class="vb"><i><svg width="18" height="14" viewBox="0 0 18 16" preserveAspectRatio="none" v-html="icons.details"></svg></i><Ic n="pics" w="14" h="13" /></div>
        </div>
      </div>

      <footer class="task small">
        <span class="st"><Ic n="start" vb="32" s="16" /></span><span class="st"><Ic n="ring" vb="32" s="17" /></span><span class="tv"><Ic n="tview" vb="32" s="16" /></span>
        <span v-for="a in apps" :key="a[0]" :class="['ap', 's' + a[1]]"><Ic :n="a[0]" vb="32" s="23" /></span>
        <div class="clock"><span v-fit="43">4:11 PM</span><span v-fit="52">9/26/2019</span></div>
      </footer>
    </section>
  </div>
</template>

<style>
body { margin: 0; background: #fff; overflow: hidden; }
</style>

<style scoped>
.desk { width: 3840px; height: 1080px; display: flex; overflow: hidden; font: 12px/16px "Open Sans", "Noto Sans", sans-serif; color: #000; }
.desk * { box-sizing: border-box; }
.desk b { font-weight: 400; }
.desk span, .desk b, label { white-space: nowrap; flex: none; }
.desk i { display: block; flex: none; }
.ic, svg { display: block; flex: none; overflow: visible; }
.mon { width: 1920px; height: 1080px; position: relative; display: flex; flex-direction: column; flex: none; }
.tri { width: 0; height: 0; border: 3px solid transparent; border-top: 3px solid currentColor; border-bottom: 0; }
.tri.upt { border-top: 0; border-bottom: 5px solid currentColor; }
.bar { width: 6px; height: 1px; background: currentColor; margin-bottom: 2px; }

.app { height: 1030px; background: #bfdbff; display: flex; flex-direction: column; overflow: hidden; color: #1e3f87; }
.caption { height: 30px; background: #fff; display: flex; position: relative; flex: none; }
.qat { margin: 2px 0 0 40px; width: 118px; height: 26px; border: 1px solid #b3b7bd; border-left-color: #d5d8dc; border-radius: 14px 13px 13px 2px; background: #eeeff2; display: flex; align-items: flex-start; color: #5a7cb8; }
.q1 { margin-left: 12px; margin-top: 0; } .q2 { margin-left: 13px; } .q3 { margin: 11px 0 0 13px; } .q4 { margin-left: 6px; }
.qmore { margin: 10px 0 0 9px; color: #1b2f66; display: flex; flex-direction: column; }
.orb { position: absolute; left: 4px; top: 1px; width: 37px; height: 37px; border-radius: 50%; background: linear-gradient(#f2f5f8, #b6c0cb); border: 2px solid #858e99; box-shadow: inset 0 0 0 1px #fff; display: flex; align-items: center; justify-content: center; z-index: 2; }
.sys { margin-left: auto; margin-right: 2px; display: flex; color: #000; height: 28px; }
.sys span { width: 58px; display: flex; align-items: center; justify-content: center; }
.sys .close { background: #e81123; color: #fff; }
.rtabs { height: 22px; display: flex; align-items: center; flex: none; padding-top: 2px; position: relative; z-index: 1; }
.rt { height: 20px; display: flex; align-items: center; }
.rt0 { margin-left: 48px; width: 42px; padding-left: 11px; background: linear-gradient(#f7fafe, #e4edf8); border: 1px solid #8db2e3; border-bottom: 0; border-radius: 3px 3px 0 0; }
.rt1 { margin-left: 16px; } .rt2 { margin-left: 30px; } .rt3 { margin-left: 30px; }
.find { margin-left: auto; margin-right: 107px; } .last { margin-right: 2px; color: #5a7cb8; }
.ribbon { margin: -1px 1px 0 1px; height: 90px; border: 1px solid #8db2e3; border-bottom-color: #7fd6d6; border-radius: 4px; background: linear-gradient(#dfe9f5 0, #d3dfef 17px, #c7d8ed 18px, #d9e7f5 60px, #e3f4ff 100%); display: flex; gap: 4px; padding: 2px 2px; flex: none; box-shadow: 0 1px 1px #8fa9c9; }
.grp { height: 85px; border: 1px solid #a3bfdb; border-radius: 3px; box-shadow: inset 0 0 0 1px rgba(255, 255, 255, .45); display: flex; flex-direction: column; background: linear-gradient(#dde8f5 0, #d3e0f0 14px, #c8d9ed 15px, #dae7f5 68px); overflow: hidden; flex: none; }
.gi { display: flex; height: 68px; padding: 4px 2px 0; }
.cmd { display: flex; flex-direction: column; align-items: center; flex: none; position: relative; }
.cmd .ln { height: 13px; line-height: 13px; display: flex; }
.cmd .ic + .ln { margin-top: 4px; }
.cmd .tri { margin-top: 4px; color: #5a7cb8; }
.gl { flex: 1; background: #c1d8f0; display: flex; align-items: center; justify-content: center; color: #3e6aaa; padding-top: 1px; }
.tools { height: 81px; padding-top: 3px; display: flex; flex-direction: column; gap: 1px; align-items: flex-start; flex: none; }
.tb { height: 25px; display: flex; align-items: center; background: linear-gradient(#e5effd, #c9ddf8 60%, #b9d2f4); border-bottom: 1px solid #7da7dd; border-radius: 0 3px 3px 0; }
.grip { width: 2px; height: 15px; margin: 0 4px; background: repeating-linear-gradient(#7d9fd3 0 2px, transparent 2px 4px); }
.ti { width: 22px; display: flex; justify-content: center; }
.over { align-self: stretch; width: 10px; margin-left: 3px; background: linear-gradient(#c0d8fa, #7aa4e0); border-radius: 0 3px 3px 0; color: #fff; padding: 15px 2px 0; }
.view { border: 1px solid #646464; border-top-color: #5d6167; height: 784px; display: flex; flex-direction: column; background: #f0f0f0; flex: none; }
.vrow { display: flex; height: 762px; }
.canvas { width: 1897px; background: #fff; border: 2px solid #ff0; position: relative; margin-right: 1px; }
.north { position: absolute; left: 700px; top: -2px; }
.triad { position: absolute; left: 28px; top: 636px; }
.cursor { position: absolute; left: 962px; top: 358px; }
.vs { width: 20px; display: flex; flex-direction: column; align-items: center; padding: 5px 0; color: #555; background: #f0f0f0; }
.vs .thumb { width: 19px; height: 20px; background: #cdcdcd; margin: 354px 0 auto; }
.hs { flex: 1; display: flex; justify-content: space-between; align-items: center; padding: 0 25px 2px 4px; color: #555; }
.cmdbar { margin-top: 1px; height: 24px; border-top: 1px solid #fff; background: linear-gradient(#d9e8fb 0, #c3d9f7 7px, #b0cdf5 8px, #c6dbf6 100%); display: flex; align-items: center; padding-left: 9px; }
.cells { margin-left: auto; width: 396px; height: 100%; background: linear-gradient(#c2d9f9 0, #a9c6f1 7px, #8db2e6 8px, #83a9de 100%); display: flex; align-items: center; }
.cells i { width: 1px; height: 16px; background: #e9eef7; }
.w1 { margin-left: 33px; } .w2 { margin-left: 72px; } .w3 { margin-left: 48px; } .w4 { margin-left: 120px; }

.task { display: flex; position: relative; background: linear-gradient(90deg, #1f2827 0, #1f2827 52%, #182a2d 59%, #161d20 64%, #170f10 68%, #1d1010 75%, #1d1d1e 80%, #1d2a2b 84%, #1f2827 88%); color: #fff; }
.task span { display: flex; align-items: center; justify-content: center; }
.big { height: 50px; }
.big .st { width: 60px; }
.sbox { width: 430px; background: #f2f2f2; border-top: 1px solid #b8b8b8; display: flex; align-items: center; color: #000; padding-left: 10px; }
.sbox span { font-size: 19px; line-height: 24px; color: #333; margin-left: 12px; display: inline-block; }
.mic { margin-left: auto; margin-right: 16px; }
.big .tv { width: 63px; }
.ap { position: relative; }
.big .ap { width: 62px; }
.ap.s1::after, .ap.s2::after, .ap.s3::after { content: ""; position: absolute; bottom: 0; left: 5px; right: 6px; height: 3px; background: #76b9ed; }
.ap.s2::after { background: linear-gradient(90deg, #76b9ed 0 41px, #5b8fb9 41px); }
.ap.s3::after { left: 0; right: 1px; }
.ap.s3 { background: linear-gradient(90deg, #4b5352 61px, transparent 61px); }
.tray { margin-left: auto; display: flex; align-items: center; }
.t2 { margin-left: 26px; } .t3 { margin-left: 12px; } .t4 { margin-left: 12px; } .t5 { margin-left: 10px; }
.clock { display: flex; flex-direction: column; align-items: center; justify-content: space-between; }
.big .clock { font-size: 14.500px; margin-left: 13px; height: 44px; line-height: 20px; width: 68px; }
.nt { position: relative; margin-left: 23px; margin-top: -2px; }
.nt em { position: absolute; left: 8px; top: 9px; width: 21px; height: 21px; border-radius: 50%; background: #3a3f3e; border: 1px solid #9a9d9c; font: 15px/19px "Open Sans", sans-serif; text-align: center; }
.edge { width: 1px; height: 50px; background: #6c7372; margin: 0 6px 0 24px; }
.small { height: 40px; }
.small .st { width: 48px; }
.small .tv { width: 50px; }
.small .ap { width: 49px; }
.small .ap::after { height: 2px; left: 4px; right: 5px; }
.small .ap.s2::after { background: linear-gradient(90deg, #76b9ed 0 32px, #5b8fb9 32px); }
.small .ap.s3::after { left: 0; right: 1px; }
.small .ap.s3 { background: linear-gradient(90deg, #4b5352 48px, transparent 48px); }
.small .clock { margin-left: auto; margin-right: 6px; padding: 2px 0; }

.dlg { position: absolute; border: 1px solid #a5a5a5; background: #f0f0f0; box-shadow: 0 4px 14px rgba(0, 0, 0, .35); display: flex; flex-direction: column; }
.dt { height: 38px; background: #fff; display: flex; align-items: center; color: #929292; font-size: 15px; line-height: 20px; }
.search { left: 942px; top: 174px; width: 578px; height: 85px; }
.search .dt { padding-left: 10px; } .search .dt span { margin-left: 7px; }
.dx { margin-left: auto; margin-right: 15px; color: #777; }
.db { display: flex; padding: 8px 14px 0 8px; align-items: center; font: 14px/18px "Noto Sans", sans-serif; }
.db label { margin-top: -3px; }
.combo { margin-left: 9px; width: 500px; height: 26px; background: #fff; border: 2px solid #6a6a6a; border-right-color: #ddd; border-bottom-color: #ddd; display: flex; justify-content: flex-end; }
.combo > i { width: 18px; background: #f0f0f0; border: 1px solid #fff; border-right-color: #666; border-bottom-color: #666; display: flex; align-items: center; justify-content: center; }
.combo .tri { border-width: 5px 4px 0; }
.review { left: 514px; top: 768px; width: 1012px; height: 262px; }
.review .dt { padding-left: 9px; } .review .dt span { margin-left: 6px; font-size: 15.500px; }
.wc { margin-left: auto; display: flex; gap: 46px; margin-right: 24px; color: #888; }
.wc .off { color: #dedede; }
.grid { margin: 13px 0 0 14px; width: 989px; height: 203px; border: 1px solid #646464; border-right-width: 2px; display: flex; flex-direction: column; }
.gtop { display: flex; justify-content: space-between; height: 179px; }
.heads { display: flex; height: 67px; border-top: 1px solid #555; align-items: stretch; }
.hd { border-left: 1px solid #777; border-right: 1px solid #000; border-bottom: 2px solid #222; box-shadow: inset 1px 1px #fff; font: bold 14px/16px "Liberation Sans", Arial, sans-serif; letter-spacing: -.2px; display: flex; flex-direction: column; align-items: center; padding-top: 7px; }
.hd.one, .hd.nom { padding-top: 23px; }
.gv { width: 19px; display: flex; flex-direction: column; gap: 2px; }
.bt { border: 1px solid #fff; border-right: 2px solid #8a8a8a; border-bottom: 2px solid #8a8a8a; display: flex !important; align-items: center; justify-content: center; height: 19px; }
.bt.grow { flex: 1 !important; }
.bt .tri { border-left-width: 5px; border-right-width: 5px; border-top-width: 5px; }
.bt .tri.upt { border-top-width: 0; }
.gbot { display: flex; height: 22px; border-bottom: 1px solid #646464; }
.nb { width: 21px; display: flex !important; align-items: center; justify-content: center; border: 1px solid #fff; border-right: 2px solid #777; border-bottom: 2px solid #777; border-top: 1px solid #999; }
.sheets { display: flex; width: 784px; overflow: hidden; border-right: 2px solid #000; font: 16px/20px "Liberation Sans", Arial, sans-serif; }
.sh { display: flex; border-top: 1px solid #000; flex: none; }
.sh.act { width: 151px; background: #fff; border-top: 0; } .sh.act b { font-weight: 700; margin-left: 1px; }
.sh span { margin-left: 2px; }
.sh:not(.act) svg { margin-right: 1px; }
.gh { display: flex; width: 96px; gap: 1px; margin-left: 3px; }
.gh .bt { width: 20px; height: 21px; } .gh .mid { width: 52px; }

.player { position: absolute; left: 1808px; top: 24px; width: 103px; height: 41px; border: 1px solid #aaa; border-radius: 4px; background: #f0f0f0; display: flex; align-items: center; padding-left: 3px; }
.gearbox { width: 32px; height: 32px; margin-top: -1px; border: 2px solid #17364a; background: #4be3ea; display: flex; align-items: center; justify-content: center; overflow: hidden; }
.psep { width: 1px; height: 35px; background: #aaa; margin: 0 9px 0 4px; }
.pz { width: 6px; height: 15px; background: #04b1fd; margin-right: 3px; }
.stop { width: 15px; height: 15px; background: #04b1fd; margin-left: 8px; }
.note { position: absolute; left: 1626px; top: 68px; width: 285px; height: 55px; background: #fff; border: 1px solid #646464; display: flex; flex-direction: column; align-items: flex-end; padding: 4px 6px 0 3px; font: 12.500px/16px "DejaVu Sans Condensed", "DejaVu Sans", sans-serif; }
.tail { position: absolute; right: 4px; top: -8px; }
.prog { width: 277px; height: 11px; border: 1px solid #bcbcbc; background: #e6e6e6; padding: 2px 2px; margin: 0 -3px 1px 0; }
.prog i { width: 257px; height: 5px; background: repeating-linear-gradient(90deg, #06b025 0 5px, transparent 5px 6px); }

.exp { background: #fff; display: flex; flex-direction: column; }
.main { height: 1040px; width: 1920px; flex: none; }
.sub { position: absolute; left: 299px; top: 298px; width: 1512px; height: 652px; border: 1px solid #a0a0a0; box-shadow: 0 4px 14px rgba(0, 0, 0, .35); z-index: 2; }
.et { height: 23px; display: flex; align-items: center; color: #000; flex: none; }
.sub .et { height: 30px; padding-left: 8px; }
.sp { width: 1px; height: 12px; background: #888; margin: 0 12px 0 8px; }
.e2 { margin: 0 8px 0 7px; }
.em { width: 7px; margin-top: 3px; }
.sp.s2 { margin: 0 7px 0 8px; }
.tt { color: #999; }
.ec { margin-left: auto; display: flex; color: #888; margin-right: 2px; margin-top: -3px; }
.sub .ec { margin-right: 0; }
.ec span { width: 45.500px; display: flex; justify-content: center; }
.er { height: 24px; border-bottom: 1px solid #dadbdc; display: flex; align-items: center; color: #333; flex: none; padding-right: 4px; }
.ef { width: 56px; align-self: stretch; background: #0063b1; color: #fff; display: flex; align-items: center; justify-content: center; }
.a { margin-left: 14px; } .b { margin-left: 29px; } .c { margin-left: 29px; }
.ech { margin-left: auto; margin-right: 10px; color: #999; }
.ea { height: 35px; display: flex; align-items: center; flex: none; color: #666; padding-right: 12px; }
.al { margin-left: 13px; } .ar { margin-left: 17px; color: #ccc; } .ad { margin-left: 13px; } .au { margin-left: 11px; }
.addr { margin-left: 7px; flex: 1; height: 22px; border: 1px solid #d9d9d9; display: flex; align-items: center; color: #222; padding-left: 1px; }
.cv { margin: 0 8px 0 9px; color: #777; }
.drop { margin-left: auto; color: #555; margin-right: 3px; }
.rf { width: 18px; height: 20px; border-left: 1px solid #d9d9d9; display: flex !important; align-items: center; justify-content: center; }
.es { margin-left: 12px; width: 202px; height: 22px; border: 1px solid #d9d9d9; display: flex; align-items: center; justify-content: space-between; padding: 0 8px; color: #6d6d6d; }
.eb { flex: 1; display: flex; min-height: 0; }
.nav { width: 308px; padding-top: 16px; flex: none; }
.sub .nav { width: 289px; }
.nr { height: 24px; display: flex; align-items: center; padding-left: 33px; }
.nr.top { padding-left: 24px; } .nr.top span { margin-left: 6px; } .nr.in span { margin-left: 5px; }
.nr.top + .nr.top, .nr.in + .nr.top { margin-top: 8px; }
.sel { background: #d9d9d9; }
.pin { margin-left: auto; margin-right: 4px; } .sub .pin { margin-right: 2px; }
.nvs { width: 16px; background: #f0f0f0; display: flex; flex-direction: column; align-items: center; padding: 4px 0; color: #505050; margin-right: 3px; }
.nvs i { width: 16px; height: 496px; background: #cdcdcd; margin: 4px 0 auto; }
.list { border-left: 1px solid #efefef; flex: 1; }
.lh { display: flex; height: 26px; position: relative; align-items: center; color: #4c607a; margin-bottom: 5px; }
.lh span:nth-child(1) { margin-left: 18px; } .lh span:nth-child(2) { margin-left: 297px; } .lh span:nth-child(3) { margin-left: 74px; } .lh span:nth-child(4) { margin-left: 125px; }
.lh::after { content: ""; position: absolute; inset: 0 auto 0 340px; width: 406px; background: linear-gradient(90deg, #e8e8e8 1px, transparent 1px 151px, #e8e8e8 151px 152px, transparent 152px 300px, #e8e8e8 300px 301px, transparent 301px 400px, #e8e8e8 400px 401px, transparent 401px); }
.sort { position: absolute; left: 172px; top: -2px; color: #777; }
.lr { height: 21px; display: grid; grid-template-columns: 347px 151px 150px; align-items: center; color: #6d6d6d; }
.lr div { display: flex; align-items: center; }
.lr div:first-child { padding-left: 18px; color: #000; gap: 7px; }
.eg { height: 23px; display: flex; align-items: center; padding-left: 14px; color: #1e395b; flex: none; }
.gs { width: 1px; height: 12px; background: #e4e4e4; margin: 0 10px 0 9px; }
.sy { margin: 0 3px 0 1px; }
.vb { margin-left: auto; display: flex; align-items: center; gap: 4px; margin-right: 8px; }
.vb i { width: 22px; height: 23px; border: 1px solid #26a0da; background: #cbe8f6; display: flex !important; align-items: center; justify-content: center; }
</style>
